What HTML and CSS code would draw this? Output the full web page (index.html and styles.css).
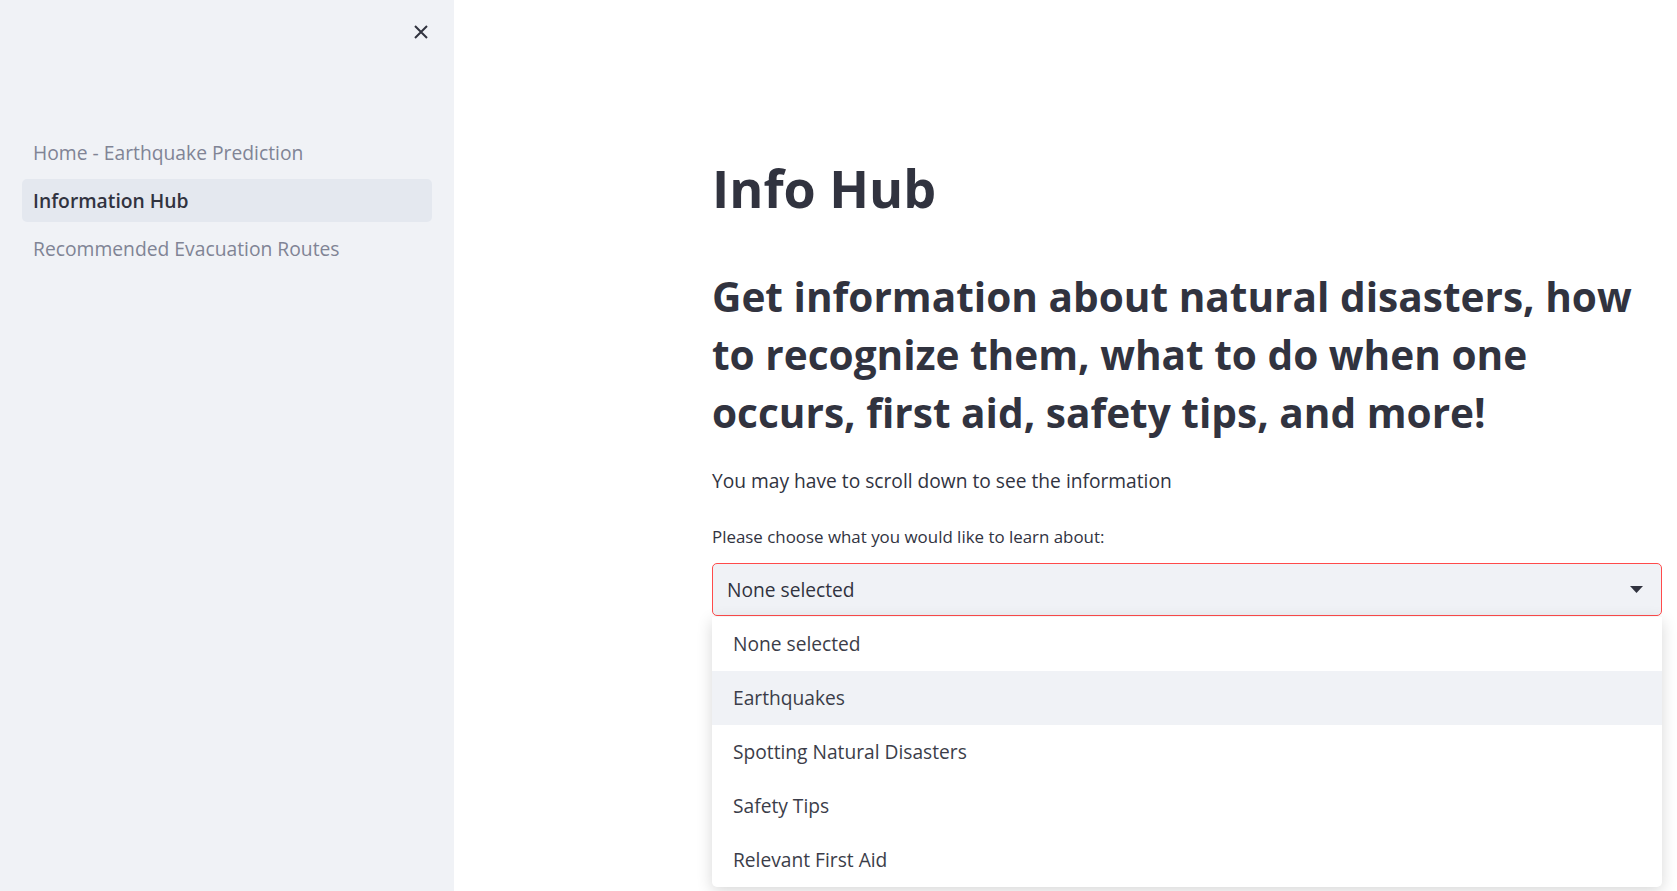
FILE: index.html
```html
<!DOCTYPE html>
<html lang="en">
<head>
<meta charset="utf-8">
<title>Information Hub</title>
<link rel="stylesheet" href="styles.css">
</head>
<body>
<div class="app">
  <aside class="sidebar">
    <div class="sidebar-header">
      <button class="close-btn" aria-label="Close sidebar">
        <svg width="16" height="16" viewBox="0 0 16 16"><path d="M2 2 L14 14 M14 2 L2 14" stroke="#31333f" stroke-width="2" stroke-linecap="butt" fill="none"/></svg>
      </button>
    </div>
    <nav class="nav">
      <a class="nav-item">Home - Earthquake Prediction</a>
      <a class="nav-item active">Information Hub</a>
      <a class="nav-item">Recommended Evacuation Routes</a>
    </nav>
  </aside>
  <main class="main">
    <div class="content">
      <h1 class="title">Info Hub</h1>
      <h2 class="subtitle">Get information about natural disasters, how to recognize them, what to do when one occurs, first aid, safety tips, and more!</h2>
      <p class="text">You may have to scroll down to see the information</p>
      <label class="label">Please choose what you would like to learn about:</label>
      <div class="select-wrap">
        <div class="select">
          <span class="select-value">None selected</span>
          <svg class="caret" width="13" height="7" viewBox="0 0 13 7"><path d="M0 0 H13 L6.5 7 Z" fill="#31333f"/></svg>
        </div>
        <ul class="menu">
          <li class="option">None selected</li>
          <li class="option hover">Earthquakes</li>
          <li class="option">Spotting Natural Disasters</li>
          <li class="option">Safety Tips</li>
          <li class="option">Relevant First Aid</li>
        </ul>
      </div>
    </div>
  </main>
</div>
</body>
</html>
```

FILE: styles.css
```css
* { box-sizing: border-box; }
html, body { margin: 0; padding: 0; height: 100%; }
body {
  font-family: "Open Sans", "Noto Sans", sans-serif;
  color: #31333f;
  background: #ffffff;
  overflow: hidden;
}
.app {
  display: flex;
  height: 891px;
}
.sidebar {
  width: 454px;
  flex: 0 0 454px;
  background: #f0f2f6;
  display: flex;
  flex-direction: column;
}
.sidebar-header {
  display: flex;
  justify-content: flex-end;
  padding: 24px 25px 0 0;
}
.close-btn {
  border: 0;
  background: transparent;
  padding: 0;
  width: 16px;
  height: 16px;
  display: block;
}
.close-btn svg { display: block; }
.nav {
  margin-top: 91px;
  padding: 0 22px 0 22px;
  display: flex;
  flex-direction: column;
  gap: 5px;
}
.nav-item {
  display: block;
  height: 43px;
  line-height: 43px;
  padding-left: 11px;
  border-radius: 5px;
  font-size: 19.3px;
  color: #808495;
}
.nav-item.active {
  background: #e4e8ef;
  color: #31333f;
  font-weight: 600;
}
.main {
  flex: 1;
  padding-left: 258px;
  padding-top: 158px;
}
.content {
  width: 950px;
}
.title {
  margin: 0;
  font-size: 52px;
  line-height: 60px;
  font-weight: 700;
}
.subtitle {
  margin: 50px 0 0;
  font-size: 40.6px;
  line-height: 58px;
  font-weight: 700;
  max-width: 945px;
}
.text {
  margin: 25px 0 0;
  font-size: 19.2px;
  line-height: 28px;
}
.label {
  display: block;
  margin-top: 30px;
  font-size: 16.9px;
  line-height: 23px;
}
.select-wrap {
  position: relative;
  margin-top: 15px;
}
.select {
  height: 53px;
  border: 1px solid #ff4b4b;
  border-radius: 5px;
  background: #f0f2f6;
  display: flex;
  align-items: center;
  justify-content: space-between;
  padding: 0 18px 0 14px;
}
.select-value {
  font-size: 19.2px;
  line-height: 51px;
}
.caret { display: block; }
.menu {
  position: absolute;
  left: 0;
  right: 0;
  top: 54px;
  margin: 0;
  padding: 0;
  list-style: none;
  background: #ffffff;
  border-radius: 0 0 5px 5px;
  box-shadow: 0 4px 16px rgba(0, 0, 0, 0.16);
}
.option {
  height: 54px;
  line-height: 54px;
  padding-left: 21px;
  font-size: 19.2px;
  color: #3b3d49;
}
.option.hover {
  background: #f0f2f6;
}
```
